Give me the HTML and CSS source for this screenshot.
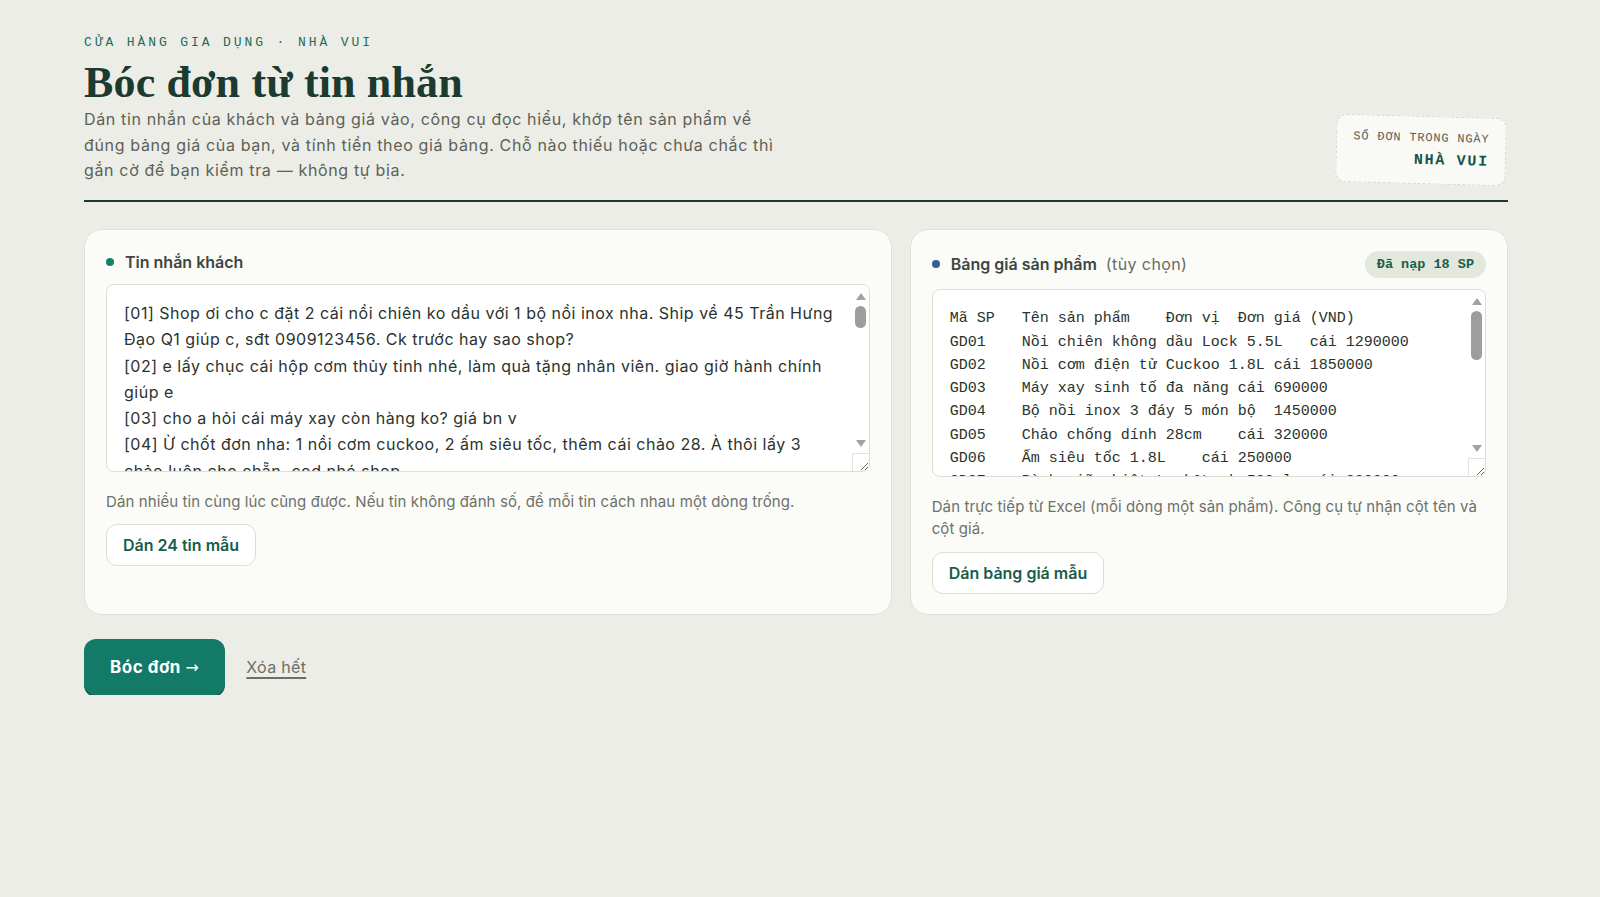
FILE: index.html
```html
<!DOCTYPE html>
<html lang="vi">
<head>
<meta charset="utf-8">
<title>Bóc đơn từ tin nhắn</title>
<link rel="stylesheet" href="styles.css">
</head>
<body>
<div class="page">
  <header class="masthead">
    <div class="intro">
      <p class="eyebrow">CỬA HÀNG GIA DỤNG · NHÀ VUI</p>
      <h1 class="title">Bóc đơn từ tin nhắn</h1>
      <p class="desc">Dán tin nhắn của khách và bảng giá vào, công cụ đọc hiểu, khớp tên sản phẩm về đúng bảng giá của bạn, và tính tiền theo giá bảng. Chỗ nào thiếu hoặc chưa chắc thì gắn cờ để bạn kiểm tra — không tự bịa.</p>
    </div>
    <div class="stamp">
      <div class="stamp-label">SỔ ĐƠN TRONG NGÀY</div>
      <div class="stamp-name">NHÀ VUI</div>
    </div>
  </header>

  <main class="panels">
    <section class="card">
      <div class="card-head">
        <span class="dot dot-green"></span>
        <span class="card-title">Tin nhắn khách</span>
      </div>
      <div class="field">
        <textarea class="msg-input" spellcheck="false">[01] Shop ơi cho c đặt 2 cái nồi chiên ko dầu với 1 bộ nồi inox nha. Ship về 45 Trần Hưng Đạo Q1 giúp c, sđt 0909123456. Ck trước hay sao shop?
[02] e lấy chục cái hộp cơm thủy tinh nhé, làm quà tặng nhân viên. giao giờ hành chính giúp e
[03] cho a hỏi cái máy xay còn hàng ko? giá bn v
[04] Ừ chốt đơn nha: 1 nồi cơm cuckoo, 2 ấm siêu tốc, thêm cái chảo 28. À thôi lấy 3 chảo luôn cho chẵn, cod nhé shop
[05] Bình giữ nhiệt lock 500ml còn màu xanh ko shop, lấy 2 cái
[06] shop gửi giúp mình 1 bộ nồi inox 3 đáy về 12 Lê Lợi Q.Hải Châu Đà Nẵng nhé
[07] cho e 3 hộp cơm với 1 bình giữ nhiệt, sđt 0912 888 123
[08] Máy xay sinh tố đa năng bảo hành bao lâu v shop?</textarea>
        <div class="vscroll" aria-hidden="true">
          <span class="sb-up"></span>
          <span class="sb-thumb thumb-short"></span>
          <span class="sb-down"></span>
        </div>
        <span class="sb-corner" aria-hidden="true"></span>
      </div>
      <p class="hint">Dán nhiều tin cùng lúc cũng được. Nếu tin không đánh số, để mỗi tin cách nhau một dòng trống.</p>
      <button class="ghost-btn" type="button">Dán 24 tin mẫu</button>
    </section>

    <section class="card">
      <div class="card-head">
        <span class="dot dot-blue"></span>
        <span class="card-title">Bảng giá sản phẩm</span>
        <span class="card-sub">(tùy chọn)</span>
        <span class="badge">Đã nạp 18 SP</span>
      </div>
      <div class="field">
        <textarea class="price-input" spellcheck="false">Mã SP	Tên sản phẩm	Đơn vị	Đơn giá (VND)
GD01	Nồi chiên không dầu Lock 5.5L	cái	1290000
GD02	Nồi cơm điện tử Cuckoo 1.8L	cái	1850000
GD03	Máy xay sinh tố đa năng	cái	690000
GD04	Bộ nồi inox 3 đáy 5 món	bộ	1450000
GD05	Chảo chống dính 28cm	cái	320000
GD06	Ấm siêu tốc 1.8L	cái	250000
GD07	Bình giữ nhiệt Lock&amp;Lock 500ml	cái	390000
GD08	Hộp cơm thủy tinh 3 ngăn	cái	145000
GD09	Bộ dao làm bếp 5 món	bộ	560000
GD10	Nồi áp suất điện 5L	cái	1690000</textarea>
        <div class="vscroll" aria-hidden="true">
          <span class="sb-up"></span>
          <span class="sb-thumb thumb-long"></span>
          <span class="sb-down"></span>
        </div>
        <span class="sb-corner" aria-hidden="true"></span>
      </div>
      <p class="hint">Dán trực tiếp từ Excel (mỗi dòng một sản phẩm). Công cụ tự nhận cột tên và cột giá.</p>
      <button class="ghost-btn" type="button">Dán bảng giá mẫu</button>
    </section>
  </main>

  <div class="actions">
    <button class="primary-btn" type="button">Bóc đơn <span class="arrow">→</span></button>
    <a class="clear-link" href="#">Xóa hết</a>
  </div>
</div>
</body>
</html>
```
FILE: styles.css
```css
* { box-sizing: border-box; }

body {
  margin: 0;
  background: #ecede6;
  font-family: Inter, "Noto Sans", sans-serif;
  color: #1f2a24;
}

.page {
  width: 1424px;
  margin-left: 84px;
  padding-top: 35px;
}

.masthead {
  display: flex;
  justify-content: space-between;
  align-items: flex-end;
  padding-bottom: 16px;
  border-bottom: 2px solid #1d3b31;
}

.eyebrow {
  margin: 0;
  font-family: "Liberation Mono", monospace;
  font-size: 13px;
  line-height: 16px;
  letter-spacing: 2.9px;
  color: #1e6b5a;
}

.title {
  margin: 8px 0 0;
  font-family: "Liberation Serif", serif;
  font-weight: 700;
  font-size: 44px;
  line-height: 48px;
  letter-spacing: 0.15px;
  color: #1b3a30;
}

.desc {
  margin: 0;
  max-width: 700px;
  font-size: 16px;
  line-height: 25.6px;
  letter-spacing: 0.65px;
  color: #5d6159;
}

.stamp {
  margin-right: 2px;
  padding: 12px 16px;
  border: 1.5px dashed #d6d9d0;
  border-radius: 10px;
  background: #f9f9f6;
  text-align: right;
  transform: rotate(1.5deg);
}

.stamp-label {
  font-family: "Liberation Mono", monospace;
  font-size: 12px;
  line-height: 18px;
  letter-spacing: 0.8px;
  color: #5b5f58;
}

.stamp-name {
  margin-top: 4px;
  font-family: "Liberation Mono", monospace;
  font-weight: 700;
  font-size: 15px;
  line-height: 20px;
  letter-spacing: 1.7px;
  color: #15574a;
}

.panels {
  margin-top: 27px;
  display: grid;
  grid-template-columns: 1.35fr 1fr;
  gap: 18px;
}

.card {
  background: #fbfbf8;
  border: 1px solid #dfe1d8;
  border-radius: 18px;
  padding: 21px 21px 20px;
  display: flex;
  flex-direction: column;
  align-items: flex-start;
}

.card-head {
  width: 100%;
  display: flex;
  align-items: center;
  min-height: 22px;
  margin-bottom: 11px;
}

.dot {
  width: 8px;
  height: 8px;
  border-radius: 50%;
  margin-right: 11px;
  flex: none;
}
.dot-green { background: #14806a; }
.dot-blue { background: #2d5f9c; }

.card-title {
  font-size: 16px;
  font-weight: 600;
  color: #3b4740;
}

.card-sub {
  margin-left: 9px;
  font-size: 16px;
  letter-spacing: 0.4px;
  color: #676b64;
}

.badge {
  margin-left: auto;
  padding: 0 12px;
  height: 27px;
  line-height: 27px;
  border-radius: 14px;
  background: #e2e8dc;
  font-family: "Liberation Mono", monospace;
  font-weight: 700;
  font-size: 13.5px;
  color: #1a5e4e;
}

.field {
  position: relative;
  width: 100%;
}

textarea {
  display: block;
  width: 100%;
  height: 188px;
  margin: 0;
  border: 1px solid #dcdfd5;
  border-radius: 8px;
  background: #ffffff;
  resize: vertical;
  outline: none;
  overflow-y: hidden;
}

.msg-input {
  padding: 15.5px 32px 14px 17px;
  font-family: Inter, "Noto Sans", sans-serif;
  font-size: 16px;
  line-height: 26.2px;
  letter-spacing: 0.5px;
  color: #2a332d;
}

.price-input {
  padding: 17.5px 32px 14px 17px;
  font-family: "Liberation Mono", monospace;
  font-size: 15px;
  line-height: 23.3px;
  tab-size: 4;
  color: #2a332d;
}

/* drawn scrollbar lying over the textarea's right edge */
.vscroll {
  position: absolute;
  top: 1px;
  right: 1px;
  bottom: 19px;
  width: 16px;
  background: #ffffff;
  border-top-right-radius: 7px;
  pointer-events: none;
}

.sb-up,
.sb-down {
  position: absolute;
  left: 3px;
  width: 0;
  height: 0;
  border-left: 5px solid transparent;
  border-right: 5px solid transparent;
}
.sb-up {
  top: 8px;
  border-bottom: 7px solid #a3a3a3;
}
.sb-down {
  bottom: 6px;
  border-top: 7px solid #a3a3a3;
}

.sb-thumb {
  position: absolute;
  left: 2px;
  width: 11px;
  top: 21px;
  border-radius: 6px;
  background: #9d9d9d;
}
.thumb-short { height: 22px; }
.thumb-long { height: 49px; }

.sb-corner {
  position: absolute;
  right: 1px;
  bottom: 1px;
  width: 17px;
  height: 18px;
  border-top: 1px solid #e3e3e3;
  border-left: 1px solid #e3e3e3;
  pointer-events: none;
}

.hint {
  margin: 19px 0 11px;
  font-size: 15px;
  line-height: 22.5px;
  color: #6d716a;
  letter-spacing: 0.1px;
}

.ghost-btn {
  height: 42px;
  padding: 0 16px;
  border: 1px solid #dcdfd4;
  border-radius: 11px;
  background: #ffffff;
  font-family: Inter, "Noto Sans", sans-serif;
  font-size: 16px;
  font-weight: 600;
  color: #185c4c;
  cursor: pointer;
}

.actions {
  margin-top: 24px;
  display: flex;
  align-items: center;
  gap: 21px;
}

.primary-btn {
  height: 56px;
  padding: 0 26px;
  border: none;
  border-radius: 12px;
  background: #137a68;
  box-shadow: 0 2px 0 #0e5c4e;
  font-family: Inter, "Noto Sans", sans-serif;
  font-size: 17px;
  font-weight: 700;
  letter-spacing: 0.5px;
  color: #ffffff;
  cursor: pointer;
}

.arrow {
  font-family: "DejaVu Sans", sans-serif;
  font-weight: 400;
  font-size: 16px;
}

.clear-link {
  font-size: 16px;
  letter-spacing: 0.3px;
  color: #6b6f68;
  text-decoration: underline;
  text-decoration-thickness: 1.5px;
  text-underline-offset: 4px;
}
```
